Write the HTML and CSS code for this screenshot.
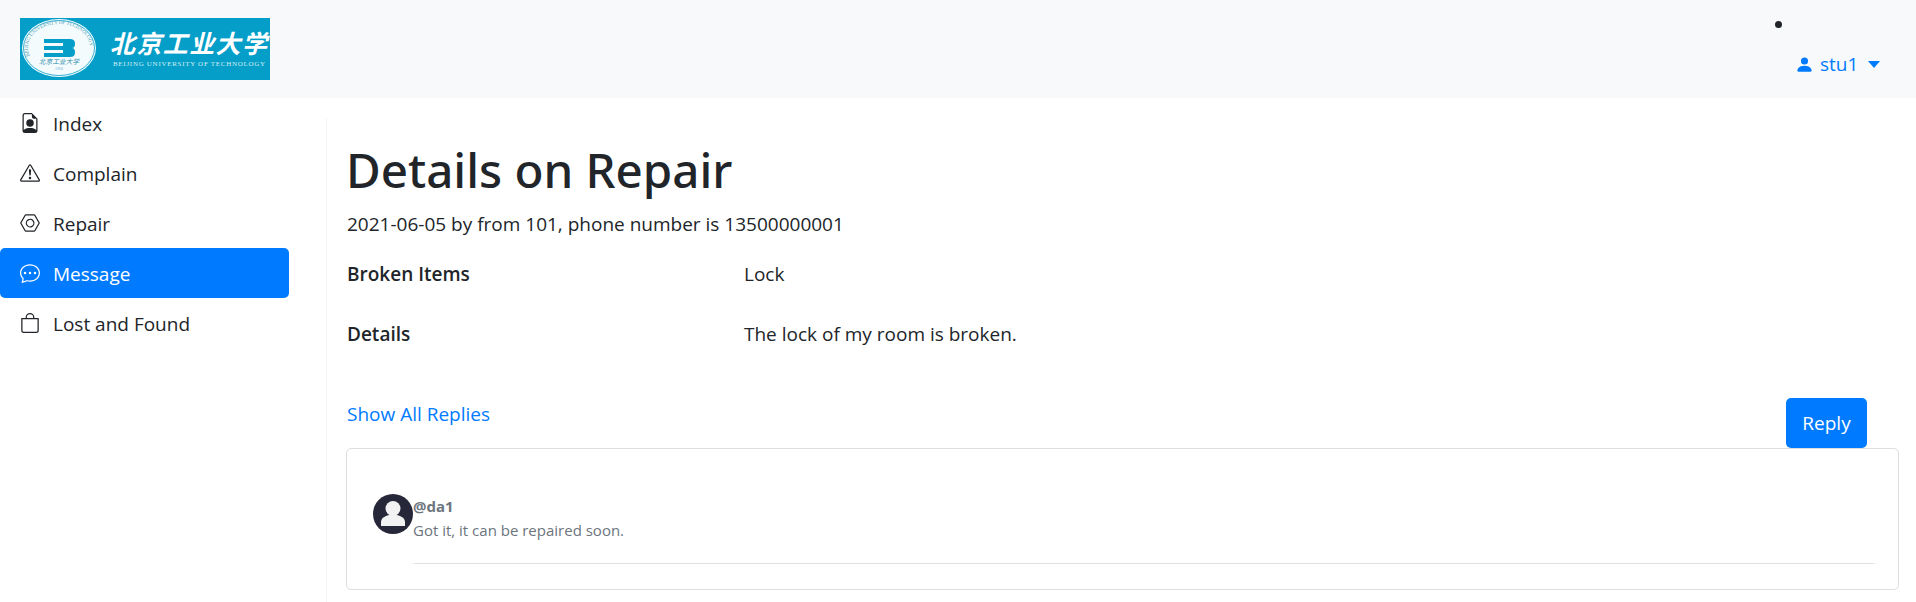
FILE: index.html
```html
<!DOCTYPE html>
<html lang="en">
<head>
    <meta charset="UTF-8">
    <meta name="viewport" content="width=device-width, initial-scale=1.0">
    <title>Details on Repair</title>
    <link rel="stylesheet" href="styles.css">
</head>
<body>
    <header class="navbar">
        <svg class="logo" width="250" height="62" viewBox="0 0 250 62">
            <defs>
                <path id="sealArc" d="M9.8 38A31 24 0 1 1 68.200 38"/>
            </defs>
            <rect width="250" height="62" fill="#049ec8"/>
            <ellipse cx="39" cy="30" rx="37" ry="29" fill="#f4fbfd"/>
            <ellipse cx="39" cy="30" rx="35.5" ry="27.5" fill="none" stroke="#049ec8" stroke-width=".8"/>
            <text class="logo-ring"><textPath href="#sealArc">BEIJING UNIVERSITY OF TECHNOLOGY</textPath></text>
            <path d="M24 21h26q5 0 5 4.500t-3 4.500q3 0 3 4.500t-5 4.500H24v-4h19v-3H24v-4h19v-3H24z" fill="#049ec8"/>
            <text x="19" y="46" class="logo-mini" textLength="40">北京工业大学</text>
            <text x="39" y="52" class="logo-year">1960</text>
            <text x="90" y="35" class="logo-cn" textLength="157">北京工业大学</text>
            <text x="93" y="48" class="logo-en" textLength="152">BEIJING UNIVERSITY OF TECHNOLOGY</text>
        </svg>
        <div class="user-area">
            <span class="dot"></span>
            <a class="user-link" href="#">
                <svg class="user-icon" viewBox="0 0 16 16" fill="currentColor"><path d="M3 14s-1 0-1-1 1-4 6-4 6 3 6 4-1 1-1 1H3zm5-6a3 3 0 1 0 0-6 3 3 0 0 0 0 6z"/></svg>
                stu1
                <span class="caret"></span>
            </a>
        </div>
    </header>

    <div class="layout">
        <nav class="sidebar">
            <a class="side-link" href="#">
                <svg class="side-icon" viewBox="0 0 16 16" fill="currentColor"><path d="M11 8a3 3 0 1 1-6 0 3 3 0 0 1 6 0z"/><path d="M14 14V4.5L9.5 0H4a2 2 0 0 0-2 2v12a2 2 0 0 0 2 2h8a2 2 0 0 0 2-2zM9.5 3A1.5 1.5 0 0 0 11 4.5h2v9.255S12 12 8 12s-5 1.755-5 1.755V2a1 1 0 0 1 1-1h5.5v2z"/></svg>
                Index
            </a>
            <a class="side-link" href="#">
                <svg class="side-icon" viewBox="0 0 16 16" fill="currentColor"><path d="M7.938 2.016A.13.13 0 0 1 8.002 2a.13.13 0 0 1 .063.016.146.146 0 0 1 .054.057l6.857 11.667c.036.06.035.124.002.183a.163.163 0 0 1-.054.06.116.116 0 0 1-.066.017H1.146a.115.115 0 0 1-.066-.017.163.163 0 0 1-.054-.06.176.176 0 0 1 .002-.183L7.884 2.073a.147.147 0 0 1 .054-.057zm1.044-.45a1.13 1.13 0 0 0-1.96 0L.165 13.233c-.457.778.091 1.767.98 1.767h13.713c.889 0 1.438-.99.98-1.767L8.982 1.566z"/><path d="M7.002 12a1 1 0 1 1 2 0 1 1 0 0 1-2 0zM7.1 5.995a.905.905 0 1 1 1.8 0l-.35 3.507a.552.552 0 0 1-1.1 0L7.1 5.995z"/></svg>
                Complain
            </a>
            <a class="side-link" href="#">
                <svg class="side-icon" viewBox="0 0 16 16" fill="currentColor"><path d="m11.42 2 3.428 6-3.428 6H4.58L1.152 8 4.58 2h6.84zM4.58 1a1 1 0 0 0-.868.504l-3.428 6a1 1 0 0 0 0 .992l3.428 6A1 1 0 0 0 4.58 15h6.84a1 1 0 0 0 .868-.504l3.428-6a1 1 0 0 0 0-.992l-3.428-6A1 1 0 0 0 11.42 1H4.58z"/><path d="M6.848 5.933a2.5 2.5 0 1 0 2.5 4.33 2.5 2.5 0 0 0-2.5-4.33zm-1.78 3.915a3.5 3.5 0 1 1 6.061-3.5 3.5 3.5 0 0 1-6.062 3.5z"/></svg>
                Repair
            </a>
            <a class="side-link active" href="#">
                <svg class="side-icon" viewBox="0 0 16 16" fill="currentColor"><path d="M5 8a1 1 0 1 1-2 0 1 1 0 0 1 2 0zm4 0a1 1 0 1 1-2 0 1 1 0 0 1 2 0zm3 1a1 1 0 1 0 0-2 1 1 0 0 0 0 2z"/><path d="m2.165 15.803.02-.004c1.83-.363 2.948-.842 3.468-1.105A9.06 9.06 0 0 0 8 15c4.418 0 8-3.134 8-7s-3.582-7-8-7-8 3.134-8 7c0 1.76.743 3.37 1.97 4.6a10.437 10.437 0 0 1-.524 2.318l-.003.011a10.722 10.722 0 0 1-.244.637c-.079.186.074.394.273.362a21.673 21.673 0 0 0 .693-.125zm.8-3.108a1 1 0 0 0-.287-.801C1.618 10.83 1 9.468 1 8c0-3.192 3.004-6 7-6s7 2.808 7 6c0 3.193-3.004 6-7 6a8.06 8.06 0 0 1-2.088-.272 1 1 0 0 0-.711.074c-.387.196-1.24.57-2.634.893a10.97 10.97 0 0 0 .398-2z"/></svg>
                Message
            </a>
            <a class="side-link" href="#">
                <svg class="side-icon" viewBox="0 0 16 16" fill="currentColor"><path d="M8 1a2.5 2.5 0 0 1 2.5 2.5V4h-5v-.5A2.5 2.5 0 0 1 8 1zm3.5 3v-.5a3.5 3.5 0 1 0-7 0V4H1v10a2 2 0 0 0 2 2h10a2 2 0 0 0 2-2V4h-3.5zM2 5h12v9a1 1 0 0 1-1 1H3a1 1 0 0 1-1-1V5z"/></svg>
                Lost and Found
            </a>
        </nav>

        <main class="content">
            <h1 class="title">Details on Repair</h1>
            <p class="subtitle">2021-06-05 by from 101, phone number is 13500000001</p>

            <div class="detail-list">
                <div class="detail-row">
                    <b class="detail-label">Broken Items</b>
                    <span>Lock</span>
                </div>
                <div class="detail-row">
                    <b class="detail-label">Details</b>
                    <span>The lock of my room is broken.</span>
                </div>
            </div>

            <div class="reply-bar">
                <a class="show-all" href="#">Show All Replies</a>
                <button class="reply-btn">Reply</button>
            </div>

            <section class="replies">
                <div class="reply">
                    <svg class="avatar" viewBox="0 0 40 40">
                        <circle cx="20" cy="20" r="20" fill="#27273a"/>
                        <circle cx="20" cy="14.5" r="7.5" fill="#f2f2f2"/>
                        <path d="M8 32v-4q0-4 5-6l3-1h8l3 1q5 2 5 6v4z" fill="#f2f2f2"/>
                    </svg>
                    <div class="reply-body">
                        <b class="reply-name">@da1</b>
                        <span>Got it, it can be repaired soon.</span>
                    </div>
                </div>
            </section>
        </main>
    </div>
</body>
</html>
```

FILE: styles.css
```css
/* General */
body {
    margin: 0;
    font-family: "Open Sans", "Noto Sans", sans-serif;
    font-size: 19px;
    line-height: 27px;
    color: #212529;
    background: #fff;
    overflow: hidden;
}

a {
    text-decoration: none;
}

/* Top bar */
.navbar {
    height: 98px;
    padding: 0 36px 0 20px;
    display: flex;
    justify-content: space-between;
    align-items: center;
    background: #f8f9fa;
}

.logo {
    display: block;
}

.logo-cn {
    font-family: "Noto Sans CJK SC", sans-serif;
    font-size: 25px;
    font-weight: 700;
    font-style: italic;
    fill: #fff;
}

.logo-en {
    font-family: "Liberation Serif", serif;
    font-size: 7px;
    fill: #d5eef5;
}

.logo-ring {
    font-family: "Liberation Serif", serif;
    font-size: 5px;
    fill: #4a9db8;
}

.logo-mini {
    font-family: "Noto Sans CJK SC", sans-serif;
    font-size: 6.5px;
    font-style: italic;
    fill: #1f87a6;
}

.logo-year {
    font-family: "Liberation Serif", serif;
    font-size: 4px;
    fill: #6fb9cf;
    text-anchor: middle;
}

.user-area {
    width: 102px;
    height: 98px;
    position: relative;
}

.dot {
    position: absolute;
    left: -3px;
    top: 21px;
    width: 7px;
    height: 7px;
    border-radius: 50%;
    background: #212529;
}

.user-link {
    position: absolute;
    left: 17px;
    top: 51px;
    display: flex;
    align-items: center;
    gap: 6px;
    color: #007bff;
    white-space: nowrap;
}

.user-icon {
    width: 19px;
    height: 19px;
}

.caret {
    margin-left: 4px;
    border-top: 7px solid #007bff;
    border-left: 6px solid transparent;
    border-right: 6px solid transparent;
}

/* Sidebar */
.layout {
    display: flex;
}

.sidebar {
    width: 289px;
    flex: none;
    margin-right: 37px;
}

.side-link {
    height: 50px;
    padding: 2px 0 0 20px;
    box-sizing: border-box;
    display: flex;
    align-items: center;
    gap: 13px;
    color: #212529;
    border-radius: 5px;
}

.side-link.active {
    background: #007bff;
    color: #fff;
}

.side-icon {
    width: 20px;
    height: 20px;
    margin-top: -2px;
}

/* Main */
.content {
    flex: 1;
    min-width: 0;
    height: 484px;
    padding: 22px 17px 0 21px;
    margin-top: 20px;
    box-shadow: inset 1px 0 0 #f4f4f4;
    box-sizing: border-box;
}

.title {
    margin: 0 0 0 -1px;
    font-family: "Noto Sans", sans-serif;
    font-size: 47.5px;
    line-height: 60px;
    font-weight: 500;
}

.subtitle {
    margin: 11px 0 0;
}

.detail-list {
    margin-top: 13px;
}

.detail-row {
    display: flex;
    height: 60px;
    padding-top: 10px;
    box-sizing: border-box;
}

.detail-label {
    width: 397px;
    flex: none;
    font-weight: 600;
}

.reply-bar {
    display: flex;
    justify-content: space-between;
    align-items: flex-end;
    margin-top: 27px;
    padding-right: 32px;
}

.show-all {
    color: #007bff;
    padding-bottom: 20px;
}

.reply-btn {
    width: 81px;
    height: 50px;
    border: none;
    border-radius: 5px;
    background: #007bff;
    color: #fff;
    font: inherit;
}

/* Replies */
.replies {
    height: 142px;
    margin-left: -1px;
    box-sizing: border-box;
    border: 1px solid #dedede;
    border-radius: 5px;
    padding: 45px 23px 0 26px;
}

.reply {
    display: flex;
}

.avatar {
    width: 40px;
    height: 40px;
    flex: none;
}

.reply-body {
    flex: 1;
    height: 69px;
    border-bottom: 1px solid #dee2e6;
    display: flex;
    flex-direction: column;
    font-size: 15px;
    line-height: 25px;
    color: #6c757d;
}

.reply-name {
    font-weight: 700;
    line-height: 24px;
}
```
